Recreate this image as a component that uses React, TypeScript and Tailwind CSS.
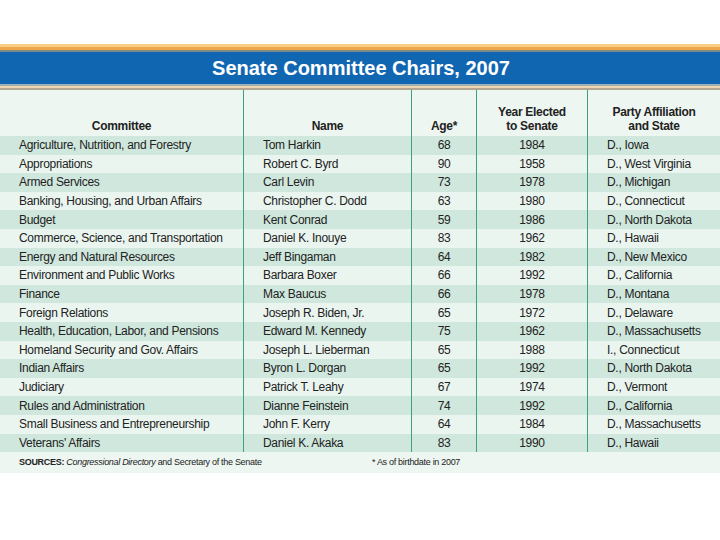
import React from "react";

const rows: [string, string, string, string, string][] = [
  ["Agriculture, Nutrition, and Forestry", "Tom Harkin", "68", "1984", "D., Iowa"],
  ["Appropriations", "Robert C. Byrd", "90", "1958", "D., West Virginia"],
  ["Armed Services", "Carl Levin", "73", "1978", "D., Michigan"],
  ["Banking, Housing, and Urban Affairs", "Christopher C. Dodd", "63", "1980", "D., Connecticut"],
  ["Budget", "Kent Conrad", "59", "1986", "D., North Dakota"],
  ["Commerce, Science, and Transportation", "Daniel K. Inouye", "83", "1962", "D., Hawaii"],
  ["Energy and Natural Resources", "Jeff Bingaman", "64", "1982", "D., New Mexico"],
  ["Environment and Public Works", "Barbara Boxer", "66", "1992", "D., California"],
  ["Finance", "Max Baucus", "66", "1978", "D., Montana"],
  ["Foreign Relations", "Joseph R. Biden, Jr.", "65", "1972", "D., Delaware"],
  ["Health, Education, Labor, and Pensions", "Edward M. Kennedy", "75", "1962", "D., Massachusetts"],
  ["Homeland Security and Gov. Affairs", "Joseph L. Lieberman", "65", "1988", "I., Connecticut"],
  ["Indian Affairs", "Byron L. Dorgan", "65", "1992", "D., North Dakota"],
  ["Judiciary", "Patrick T. Leahy", "67", "1974", "D., Vermont"],
  ["Rules and Administration", "Dianne Feinstein", "74", "1992", "D., California"],
  ["Small Business and Entrepreneurship", "John F. Kerry", "64", "1984", "D., Massachusetts"],
  ["Veterans' Affairs", "Daniel K. Akaka", "83", "1990", "D., Hawaii"],
];

const font = { fontFamily: '"Liberation Sans Narrow", "Liberation Sans", Arial, sans-serif' };

export default function App() {
  return (
    <div className="w-[720px] h-[540px] bg-white overflow-hidden" style={font}>
      <div className="h-[44px]" />
      <div className="h-[3px] bg-[#f7cd88]" />
      <div className="h-[3px] bg-[#eea64c]" />
      <div className="h-[2px] bg-[#7d8a86]" />
      <div className="h-[32px] bg-[#1166b1] flex items-center justify-center">
        <span className="text-white font-bold text-[20px] leading-none pl-[2px]" style={{ fontFamily: '"Liberation Sans", Arial, sans-serif' }}>
          Senate Committee Chairs, 2007
        </span>
      </div>
      <div className="h-[2px] bg-[#9eb0b6]" />
      <div className="h-[2px] bg-[#f1d6b4]" />
      <div className="h-[2px] bg-[#b3a592]" />
      <div className="grid grid-cols-[243px_168px_65px_111px_133px] text-[#222] text-[12px] tracking-[-0.3px]">
        {/* header */}
        <div className="h-[46px] bg-[#eef6f1] flex items-end justify-center pb-[3px] font-bold leading-[14px]">Committee</div>
        <div className="h-[46px] bg-[#eef6f1] border-l border-[#3aa283] flex items-end justify-center pb-[3px] font-bold leading-[14px]">Name</div>
        <div className="h-[46px] bg-[#eef6f1] border-l border-[#3aa283] flex items-end justify-center pb-[3px] font-bold leading-[14px]">Age*</div>
        <div className="h-[46px] bg-[#eef6f1] border-l border-[#3aa283] flex items-end justify-center pb-[3px] font-bold leading-[14px] text-center">
          Year Elected<br />to Senate
        </div>
        <div className="h-[46px] bg-[#eef6f1] border-l border-[#3aa283] flex items-end justify-center pb-[3px] font-bold leading-[14px] text-center">
          Party Affiliation<br />and State
        </div>
        {rows.map((r, i) => {
          const bg = i % 2 === 0 ? "bg-[#cfe7dc]" : "bg-[#ebf5f0]";
          return (
            <React.Fragment key={i}>
              <div className={`h-[18.6px] ${bg} flex items-center pl-[19px] whitespace-nowrap`}>{r[0]}</div>
              <div className={`h-[18.6px] ${bg} border-l border-[#3aa283] flex items-center pl-[19px] whitespace-nowrap`}>{r[1]}</div>
              <div className={`h-[18.6px] ${bg} border-l border-[#3aa283] flex items-center justify-center`}>{r[2]}</div>
              <div className={`h-[18.6px] ${bg} border-l border-[#3aa283] flex items-center justify-center`}>{r[3]}</div>
              <div className={`h-[18.6px] ${bg} border-l border-[#3aa283] flex items-center pl-[19px] whitespace-nowrap`}>{r[4]}</div>
            </React.Fragment>
          );
        })}
      </div>
      <div className="h-[21px] bg-[#eef6f1] flex items-center text-[9px] text-[#222] tracking-[-0.3px]">
        <div className="w-[372px] pl-[19px] whitespace-nowrap">
          <span className="font-bold">SOURCES:</span> <i>Congressional Directory</i> and Secretary of the Senate
        </div>
        <div className="whitespace-nowrap">* As of birthdate in 2007</div>
      </div>
    </div>
  );
}
